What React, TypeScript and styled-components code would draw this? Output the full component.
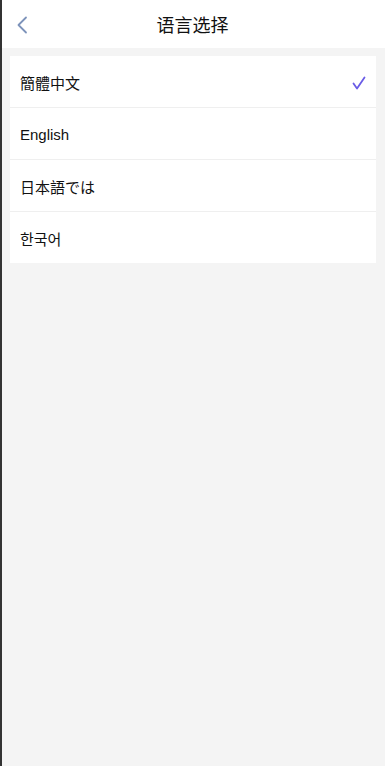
import React, { useState } from 'react';
import styled, { createGlobalStyle } from 'styled-components';

const GlobalStyle = createGlobalStyle`
  html, body {
    margin: 0;
    padding: 0;
    background: #f4f4f4;
  }
  body {
    font-family: "Liberation Sans", Arial, "Noto Sans CJK SC", sans-serif;
  }
`

const Page = styled.div`
  min-height: 766px;
  box-sizing: border-box;
  border-left: 2px solid #333;
  background: #f4f4f4;
  display: flex;
  flex-direction: column;
`

const Header = styled.header`
  height: 48px;
  background: #fff;
  display: flex;
  align-items: center;
  justify-content: center;
  position: relative;
`

const BackButton = styled.button`
  position: absolute;
  left: 10px;
  top: 14px;
  width: 20px;
  height: 22px;
  padding: 0;
  border: none;
  background: transparent;
  display: flex;
  align-items: center;
  justify-content: center;
  cursor: pointer;
`

const Title = styled.h1`
  margin: 0;
  font-size: 18px;
  font-weight: 400;
  color: #111;
  padding-right: 2px;
`

const List = styled.ul`
  list-style: none;
  margin: 8px 9px 0 8px;
  padding: 0;
  background: #fff;
`

const Item = styled.li<{ $last?: boolean }>`
  height: ${p => (p.$last ? '51px' : '52px')};
  display: flex;
  align-items: center;
  justify-content: space-between;
  padding: 2px 10px 0 10px;
  box-sizing: border-box;
  font-size: 15px;
  color: #111;
  border-bottom: ${p => (p.$last ? 'none' : '1px solid #efefef')};
  cursor: pointer;
`

const Check = () => (
  <svg width="14" height="14" viewBox="0 0 14 14">
    <path d="M1.5 7.5 L5 12.5 L12.5 1.5" fill="none" stroke="#6a5ce6" strokeWidth="1.8" strokeLinecap="round" strokeLinejoin="round" />
  </svg>
)

const languages = ['簡體中文', 'English', '日本語では', '한국어']

export default function App() {
  const [current, setCurrent] = useState(languages[0])
  return (
    <>
      <GlobalStyle />
      <Page>
        <Header>
          <BackButton aria-label="back">
            <svg width="12" height="18" viewBox="0 0 12 18">
              <path d="M10 1.5 L2.5 9 L10 16.5" fill="none" stroke="#7d93ba" strokeWidth="1.8" strokeLinecap="round" strokeLinejoin="round" />
            </svg>
          </BackButton>
          <Title>语言选择</Title>
        </Header>
        <List>
          {languages.map((l, i) => (
            <Item key={l} $last={i === languages.length - 1} onClick={() => setCurrent(l)}>
              <span>{l}</span>
              {current === l && <Check />}
            </Item>
          ))}
        </List>
      </Page>
    </>
  );
}
